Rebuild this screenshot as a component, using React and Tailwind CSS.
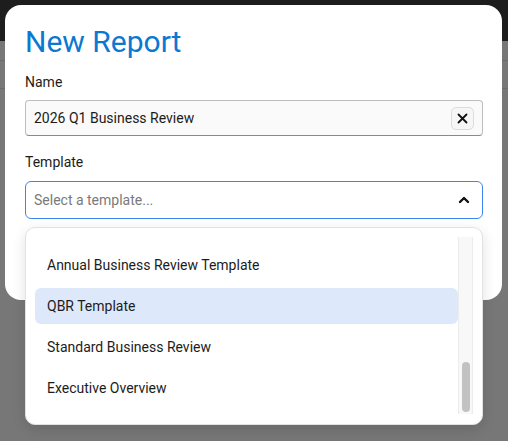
import React from 'react';

const items = ['Annual Business Review Template', 'QBR Template', 'Standard Business Review', 'Executive Overview'];

const NewReport = () => {
  const selected = 'QBR Template';

  return (
    <div className="relative w-[508px] h-[441px] overflow-hidden bg-[#777777] font-['Roboto',sans-serif]">
      {/* dimmed page behind the dialog */}
      <div className="h-[41px] bg-[#1d1d1d]" />
      <div className="h-[20px] border-b border-[#6a6a6a]" />
      <div className="h-[28px] border-b border-[#6a6a6a]" />

      {/* Dialog */}
      <div className="absolute left-[5px] top-[5px] w-[497px] h-[295px] rounded-[16px] bg-white pl-[20px] pr-[19px] pt-[20px]">
        <h2 className="text-[30px] leading-[34px] text-[#0b78d2]">New Report</h2>

        <label className="block mt-[13px] text-sm leading-5 text-[#1c1c1c]">Name</label>
        <div className="mt-[8px] flex items-center h-[36px] rounded-[4px] border border-[#bdbdbd] border-b-[#8a8a8a] bg-[#fafafa] pl-[8px] pr-[8px]">
          <span className="flex-1 text-sm text-[#1c1c1c]">2026 Q1 Business Review</span>
          <button className="flex items-center justify-center w-[23px] h-[23px] rounded-[5px] border border-[#dcdcdc] bg-[#f6f6f6]">
            <svg width="11" height="11" viewBox="0 0 11 11">
              <path d="M1.5 1.5 L9.5 9.5 M9.5 1.5 L1.5 9.5" stroke="#111" strokeWidth="1.8" strokeLinecap="round" />
            </svg>
          </button>
        </div>

        <label className="block mt-[16px] text-sm leading-5 text-[#1c1c1c]">Template</label>
        <div className="mt-[9px] flex items-center h-[38px] rounded-[6px] border-[1.5px] border-[#3b87f0] bg-white pl-[8px] pr-[12px]">
          <span className="flex-1 text-sm text-[#7a7a7a]">Select a template...</span>
          <svg width="12" height="8" viewBox="0 0 12 8">
            <path d="M2 6 L6 2 L10 6" fill="none" stroke="#111" strokeWidth="2.4" strokeLinecap="round" strokeLinejoin="round" />
          </svg>
        </div>
      </div>

      {/* Open listbox */}
      <div className="absolute left-[25px] top-[227px] w-[458px] h-[198px] rounded-[10px] border border-[#e2e2e2] bg-white shadow-[0_4px_14px_rgba(0,0,0,0.12)] flex pl-[9px] pr-[9px] pt-[9px] pb-[10px]">
        <div className="flex-1 overflow-hidden flex flex-col gap-[5px] pt-[10px]">
          {items.map((item) => (
            <div
              key={item}
              className={`h-[36px] shrink-0 flex items-center px-[12px] rounded-[6px] text-sm text-[#1c1c1c] ${item === selected ? 'bg-[#dde9fb]' : ''}`}
            >
              {item}
            </div>
          ))}
        </div>
        <div className="w-[15px] bg-[#f8f8f8] border-x border-[#ececec] flex flex-col justify-end pb-[2px] items-center">
          <div className="w-[8px] h-[50px] rounded-full bg-[#c2c2c2]" />
        </div>
      </div>
    </div>
  );
};

export default NewReport;
